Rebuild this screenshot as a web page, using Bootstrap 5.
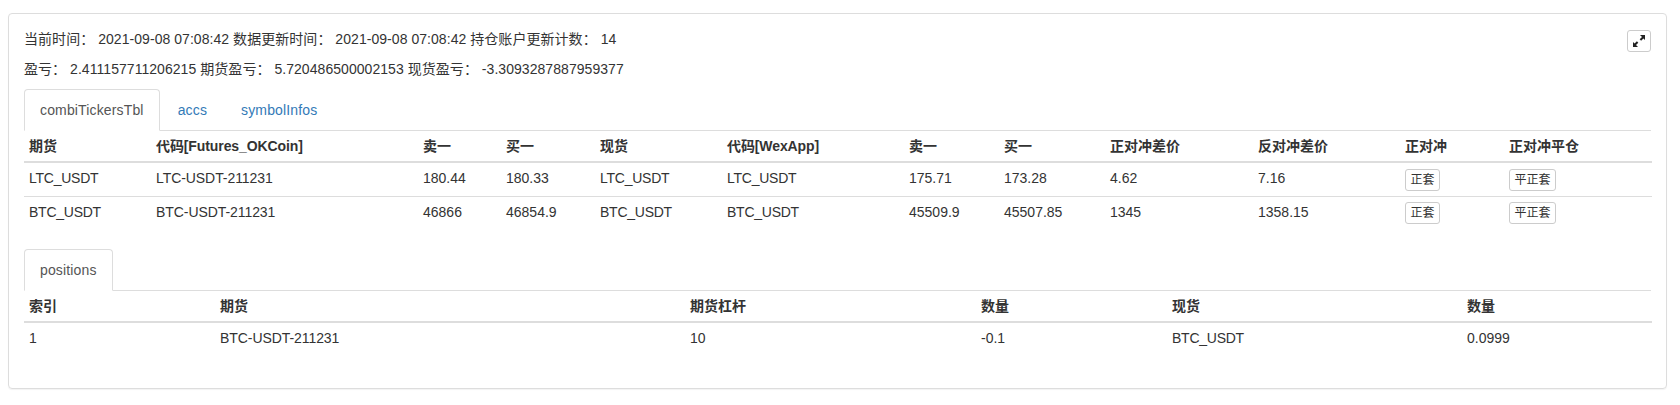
<!DOCTYPE html>
<html lang="zh">
<head>
<meta charset="utf-8">
<title>status</title>
<link rel="stylesheet" href="https://cdn.jsdelivr.net/npm/bootstrap@5.3.0/dist/css/bootstrap.min.css">
<style>
html, body { background: #fff; }
body { font-family: "Liberation Sans", "Noto Sans CJK SC", sans-serif; font-size: 14px; line-height: 20px; color: #333; }
.panelbox { margin: 13px 13px 17px 8px; padding: 15px; border: 1px solid #ddd; border-radius: 4px; box-shadow: 0 1px 1px rgba(0,0,0,.05); }
.infoline { margin: 0 0 10px; letter-spacing: .05px; }
.expandbtn { width: 24px; height: 22px; margin-top: 1px; padding: 0; display: flex; align-items: center; justify-content: center; background: #fff; border: 1px solid #ccc; border-radius: 3px; }
.tabbar { border-bottom: 1px solid #ddd; }
.tabbar .nav-link { padding: 10px 15px; line-height: 20px; color: #337ab7; font-size: 14px; letter-spacing: .15px; border: 1px solid transparent; border-radius: 4px 4px 0 0; margin: 0 2px -1px 0; }
.tabbar .nav-link.active { color: #555; background: #fff; border-color: #ddd #ddd #fff; }
.datatbl { table-layout: fixed; width: 100%; margin: 0 0 20px; border-collapse: collapse; color: #333; }
.datatbl th, .datatbl td { padding: 5px; line-height: 20px; font-size: 14px; vertical-align: top; border-top: 1px solid #ddd; border-bottom: 0; box-shadow: none; background: transparent; color: #333; }
.datatbl thead th { font-weight: 700; border-top: 0; border-bottom: 2px solid #ddd; vertical-align: bottom; }
.datatbl tbody tr:first-child td { border-top: 0; }
.datatbl .symcell { letter-spacing: -.25px; }
.datatbl .codecell { letter-spacing: -.07px; }
.datatbl .codehead { letter-spacing: -.1px; }
.minibtn { padding: 1px 4.5px; font-size: 12px; line-height: 18px; color: #333; background: #fff; border: 1px solid #ccc; border-radius: 3px; display: inline-block; vertical-align: top; }
.datatbl tbody tr:first-child .minibtn { margin-top: 1px; }
.t1a{width:127px}.t1b{width:267px}.t1c{width:83px}.t1d{width:94px}.t1e{width:127px}.t1f{width:182px}.t1g{width:95px}.t1h{width:106px}.t1i{width:148px}.t1j{width:147px}.t1k{width:104px}.t1l{width:148px}
.t2a{width:191px}.t2b{width:470px}.t2c{width:291px}.t2d{width:191px}.t2e{width:295px}.t2f{width:190px}
</style>
</head>
<body>
<div class="panelbox">
  <div class="d-flex justify-content-between align-items-start">
    <div>
      <p class="infoline">当前时间： 2021-09-08 07:08:42 数据更新时间： 2021-09-08 07:08:42 持仓账户更新计数： 14</p>
      <p class="infoline">盈亏： 2.411157711206215 期货盈亏： 5.720486500002153 现货盈亏： -3.3093287887959377</p>
    </div>
    <button type="button" class="expandbtn" aria-label="expand">
      <svg width="14" height="14" viewBox="0 0 14 14" fill="#222"><path d="M13 1v5l-1.600-1.600-2.300 2.300-1.400-1.400 2.300-2.300L8 1zM1 13V8l1.600 1.600 2.300-2.300 1.400 1.400-2.300 2.300L6 13z"/></svg>
    </button>
  </div>
  <ul class="nav nav-tabs tabbar">
    <li class="nav-item"><a class="nav-link active" href="#">combiTickersTbl</a></li>
    <li class="nav-item"><a class="nav-link" href="#">accs</a></li>
    <li class="nav-item"><a class="nav-link" href="#">symbolInfos</a></li>
  </ul>
  <table class="table datatbl">
    <colgroup><col class="t1a"><col class="t1b"><col class="t1c"><col class="t1d"><col class="t1e"><col class="t1f"><col class="t1g"><col class="t1h"><col class="t1i"><col class="t1j"><col class="t1k"><col class="t1l"></colgroup>
    <thead><tr><th>期货</th><th class="codehead">代码[Futures_OKCoin]</th><th>卖一</th><th>买一</th><th>现货</th><th class="codehead">代码[WexApp]</th><th>卖一</th><th>买一</th><th>正对冲差价</th><th>反对冲差价</th><th>正对冲</th><th>正对冲平仓</th></tr></thead>
    <tbody>
      <tr><td class="symcell">LTC_USDT</td><td class="codecell">LTC-USDT-211231</td><td>180.44</td><td>180.33</td><td class="symcell">LTC_USDT</td><td class="symcell">LTC_USDT</td><td>175.71</td><td>173.28</td><td>4.62</td><td>7.16</td><td><button type="button" class="minibtn">正套</button></td><td><button type="button" class="minibtn">平正套</button></td></tr>
      <tr><td class="symcell">BTC_USDT</td><td class="codecell">BTC-USDT-211231</td><td>46866</td><td>46854.9</td><td class="symcell">BTC_USDT</td><td class="symcell">BTC_USDT</td><td>45509.9</td><td>45507.85</td><td>1345</td><td>1358.15</td><td><button type="button" class="minibtn">正套</button></td><td><button type="button" class="minibtn">平正套</button></td></tr>
    </tbody>
  </table>
  <ul class="nav nav-tabs tabbar">
    <li class="nav-item"><a class="nav-link active" href="#">positions</a></li>
  </ul>
  <table class="table datatbl">
    <colgroup><col class="t2a"><col class="t2b"><col class="t2c"><col class="t2d"><col class="t2e"><col class="t2f"></colgroup>
    <thead><tr><th>索引</th><th>期货</th><th>期货杠杆</th><th>数量</th><th>现货</th><th>数量</th></tr></thead>
    <tbody><tr><td>1</td><td class="codecell">BTC-USDT-211231</td><td>10</td><td>-0.1</td><td class="symcell">BTC_USDT</td><td>0.0999</td></tr></tbody>
  </table>
</div>
<script src="https://cdn.jsdelivr.net/npm/bootstrap@5.3.0/dist/js/bootstrap.bundle.min.js"></script>
</body>
</html>
